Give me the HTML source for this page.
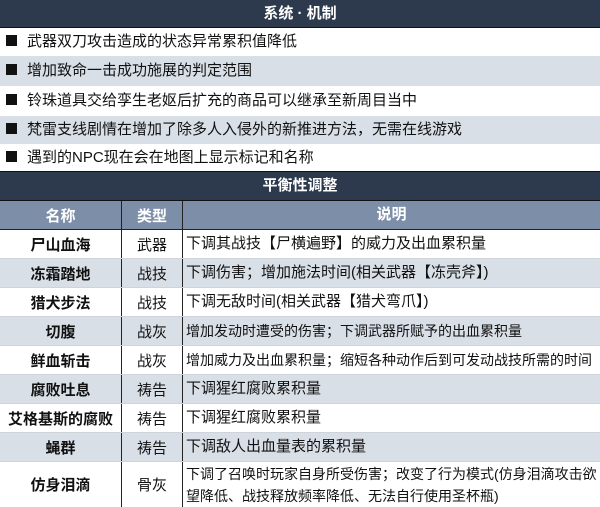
<!DOCTYPE html><html><head><meta charset="utf-8"><style>
body{margin:0;width:600px;height:507px;overflow:hidden;background:#fff;font-family:"Liberation Sans","Noto Sans CJK SC",sans-serif;}
.r{position:absolute;left:0;width:600px;box-sizing:border-box;color:#111;}
.t{background:#2d3a4d;color:#fff;font-weight:bold;font-size:15px;text-align:center;border-bottom:1px solid #111;}
.s{font-size:15px;padding-left:6px;white-space:nowrap;}
.s b{display:inline-block;width:11px;height:11px;background:#111;margin-right:10px;vertical-align:0px}
.g{background:#d9dfe7}
.c{position:absolute;top:0;bottom:0;box-sizing:border-box;display:flex;align-items:center;}
.n{left:0;width:122px;justify-content:center;font-weight:bold;font-size:15px;border-right:1px solid #222;white-space:nowrap}
.y{left:122px;width:61px;justify-content:center;font-size:15px;border-right:1px solid #222;}
.d{left:183px;right:0;font-size:15px;padding-left:3px;line-height:24px;white-space:nowrap}
.h{background:#7d8fa8;color:#fff;font-weight:bold;border-bottom:1px solid #222}
.h .n,.h .y,.h .d{color:#fff;font-size:15px;font-weight:bold}
.row{border-bottom:1px solid #cfd4da}
</style></head><body>
<div class="r t" style="top:0;height:28px;line-height:27px">系统 · 机制</div>
<div class="r s" style="top:28px;height:28px;line-height:28px"><b></b>武器双刀攻击造成的状态异常累积值降低</div>
<div class="r s g" style="top:56px;height:30px;line-height:30px"><b></b>增加致命一击成功施展的判定范围</div>
<div class="r s" style="top:86px;height:30px;line-height:30px"><b></b>铃珠道具交给孪生老妪后扩充的商品可以继承至新周目当中</div>
<div class="r s g" style="top:116px;height:28px;line-height:28px"><b></b>梵雷支线剧情在增加了除多人入侵外的新推进方法，无需在线游戏</div>
<div class="r s" style="top:144px;height:28px;line-height:28px;border-bottom:1px solid #111"><b></b>遇到的NPC现在会在地图上显示标记和名称</div>
<div class="r t" style="top:172px;height:29px;line-height:28px">平衡性调整</div>
<div class="r h" style="top:201px;height:29px"><div class="c n">名称</div><div class="c y">类型</div><div class="c d" style="justify-content:center;padding:0">说明</div></div>
<div class="r row" style="top:230px;height:29px"><div class="c n">尸山血海</div><div class="c y">武器</div><div class="c d">下调其战技【尸横遍野】的威力及出血累积量</div></div>
<div class="r row g" style="top:259px;height:29px"><div class="c n">冻霜踏地</div><div class="c y">战技</div><div class="c d">下调伤害；增加施法时间(相关武器【冻壳斧】)</div></div>
<div class="r row" style="top:288px;height:29px"><div class="c n">猎犬步法</div><div class="c y">战技</div><div class="c d">下调无敌时间(相关武器【猎犬弯爪】)</div></div>
<div class="r row g" style="top:317px;height:29px"><div class="c n">切腹</div><div class="c y">战灰</div><div class="c d" style="font-size:14px">增加发动时遭受的伤害；下调武器所赋予的出血累积量</div></div>
<div class="r row" style="top:346px;height:29px"><div class="c n">鲜血斩击</div><div class="c y">战灰</div><div class="c d" style="font-size:14px">增加威力及出血累积量；缩短各种动作后到可发动战技所需的时间</div></div>
<div class="r row g" style="top:375px;height:29px"><div class="c n">腐败吐息</div><div class="c y">祷告</div><div class="c d">下调猩红腐败累积量</div></div>
<div class="r row" style="top:404px;height:29px"><div class="c n">艾格基斯的腐败</div><div class="c y">祷告</div><div class="c d">下调猩红腐败累积量</div></div>
<div class="r row g" style="top:433px;height:29px"><div class="c n">蝇群</div><div class="c y">祷告</div><div class="c d">下调敌人出血量表的累积量</div></div>
<div class="r" style="top:462px;height:45px"><div class="c n">仿身泪滴</div><div class="c y">骨灰</div><div class="c d" style="line-height:22px;font-size:14px;display:block;padding-top:1px">下调了召唤时玩家自身所受伤害；改变了行为模式(仿身泪滴攻击欲<br>望降低、战技释放频率降低、无法自行使用圣杯瓶)</div></div>
</body></html>
